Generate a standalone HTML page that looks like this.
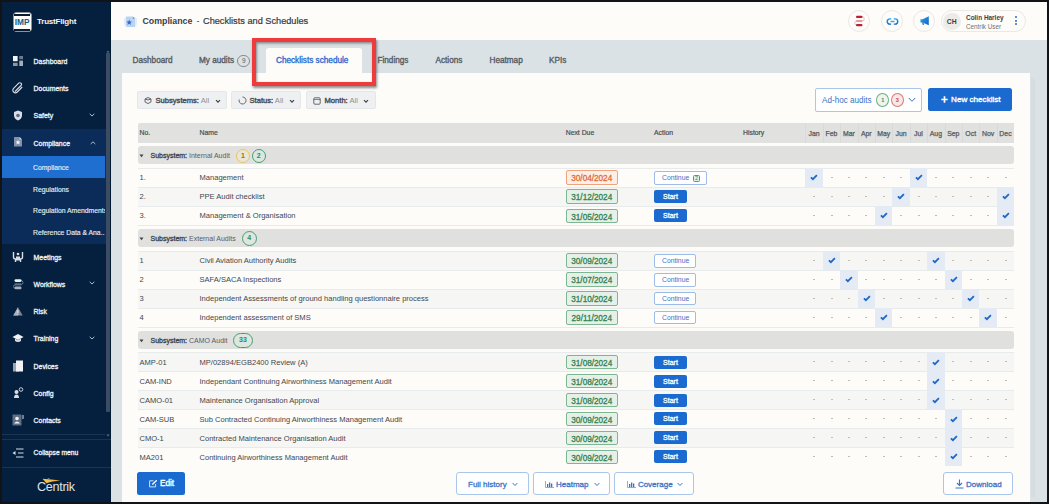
<!DOCTYPE html><html><head><meta charset="utf-8"><style>
*{box-sizing:border-box;margin:0;padding:0}
html,body{width:1049px;height:504px;overflow:hidden;background:#111317;font-family:"Liberation Sans",sans-serif}
#frame{position:absolute;left:2px;top:2px;width:1045px;height:500px;overflow:hidden;background:#dbe2e5}
#c{position:absolute;left:-2px;top:-2px;width:1049px;height:504px}
.a{position:absolute;white-space:nowrap}
.si{position:absolute;left:33.6px;font-size:6.9px;font-weight:normal;-webkit-text-stroke:0.3px currentColor;color:#eef1f5;white-space:nowrap;line-height:10px}
.sub{position:absolute;left:33px;font-size:6.8px;color:#e3e9f0;-webkit-text-stroke:0.15px #e3e9f0;white-space:nowrap;line-height:10px}
.chev{position:absolute;width:4px;height:4px;border-right:1px solid #c9d1dc;border-bottom:1px solid #c9d1dc;transform:rotate(45deg)}
.tab{position:absolute;font-size:8.2px;font-weight:normal;-webkit-text-stroke:0.35px currentColor;color:#565c65;white-space:nowrap;line-height:10px}
.filt{position:absolute;top:91px;height:18px;background:#eef0f2;border:1px solid #e4e7ea;border-radius:2px}
.ft{position:absolute;top:3.9px;font-size:7.6px;font-weight:normal;-webkit-text-stroke:0.4px #4a4f56;color:#4a4f56;line-height:10px;white-space:nowrap}
.ft span{font-weight:normal;color:#8c9097;-webkit-text-stroke:0}
.row{position:absolute;left:137.5px;width:876.5px;height:19px;border-top:1px solid #e7ebec}
.t{position:absolute;font-size:7.55px;color:#43474d;line-height:10px;white-space:nowrap}
.due{position:absolute;left:565.5px;width:52.5px;height:14.5px;border:1px solid #7db792;background:#e7f0e8;border-radius:2px;color:#33834f;font-size:8.2px;font-weight:normal;-webkit-text-stroke:0.3px currentColor;text-align:center;line-height:15.8px}
.due.o{border-color:#f0a27a;background:#fcefe7;color:#e06d38}
.start{position:absolute;left:654px;width:33px;height:13px;background:#1a6ad0;border-radius:2px;color:#fff;font-size:7px;font-weight:normal;-webkit-text-stroke:0.3px #fff;text-align:center;line-height:13.5px}
.cont{position:absolute;left:654px;width:42px;height:13.5px;border:1px solid #9dbde8;background:#fff;border-radius:2px;color:#3b72c6;font-size:6.8px;text-align:center;line-height:11px}
.mc{position:absolute;width:17.4px;height:19px;text-align:center;line-height:19px;font-size:7px;color:#c79a6a}
.mc.k{background:#e4ebf5}
.grp{position:absolute;left:137.5px;width:876.5px;height:19px;background:#e0e0de;border-radius:3px}
.gt{position:absolute;left:13px;top:4.8px;font-size:7px;color:#595d64;line-height:10px;white-space:nowrap}
.gt b{color:#3d4148;font-size:7px;font-weight:normal;-webkit-text-stroke:0.3px #3d4148}
.badge{position:absolute;top:2.4px;height:14.8px;border-radius:7.5px;border:1.1px solid;font-size:7px;font-weight:bold;text-align:center;line-height:12.6px}
.bb{position:absolute;top:472.2px;height:23.3px;border:1px solid #a9c6ec;border-radius:3px;background:#fff;color:#3b72c6;font-size:8px;font-weight:normal;-webkit-text-stroke:0.3px #3b72c6;line-height:23px;white-space:nowrap}
</style></head><body><div id="frame"><div id="c">
<div class="a" style="left:0;top:0;width:111px;height:504px;background:#05203f"></div>
<div class="a" style="left:0;top:128.5px;width:106px;height:115px;background:#0b2c58"></div>
<div class="a" style="left:0;top:156px;width:105px;height:22px;background:#1f6fd1"></div>
<div class="a" style="left:106px;top:53px;width:4px;height:359px;background:#3b4c63;border-radius:1px"></div>
<div class="a" style="left:110px;top:0;width:1px;height:504px;background:#031a33"></div>
<svg class="a" style="left:106px;top:50px" width="4" height="3" viewBox="0 0 4 3"><path d="M0.3 2.6 L2 0.5 L3.7 2.6 Z" fill="#5d6c80"/></svg>
<svg class="a" style="left:106px;top:434px" width="4" height="3" viewBox="0 0 4 3"><path d="M0.3 0.4 L2 2.5 L3.7 0.4 Z" fill="#5d6c80"/></svg>
<div class="a" style="left:12.6px;top:12.3px;width:19.1px;height:19.8px;background:#fdfdfb;border-radius:3.5px;border:1.2px solid #8a949f"></div>
<div class="a" style="left:13.8px;top:14px;width:16.7px;height:1.8px;background:#0b1a33"></div>
<div class="a" style="left:13.8px;top:28.8px;width:16.7px;height:1.8px;background:#0b1a33"></div>
<div class="a" style="left:12.6px;top:17px;width:19.1px;text-align:center;font-size:8.3px;font-weight:bold;color:#1b5a80;line-height:10px;letter-spacing:0px">IMP</div>
<div class="a" style="left:37px;top:17px;font-size:8px;font-weight:bold;color:#f4f6f9;line-height:10px;letter-spacing:-0.2px">TrustFlight</div>
<div class="si" style="top:56.6px">Dashboard</div>
<div class="si" style="top:83.6px">Documents</div>
<div class="si" style="top:111.1px">Safety</div>
<svg class="a" style="left:89.3px;top:112.7px" width="6" height="4" viewBox="0 0 6 4"><path d="M0.7 0.8 L3 3 L5.3 0.8" fill="none" stroke="#c5ccd6" stroke-width="0.9"/></svg>
<div class="si" style="top:138.6px">Compliance</div>
<svg class="a" style="left:90px;top:140.5px" width="6" height="4" viewBox="0 0 6 4"><path d="M0.7 3 L3 0.8 L5.3 3" fill="none" stroke="#c5ccd6" stroke-width="0.9"/></svg>
<div class="si" style="top:252.6px">Meetings</div>
<div class="si" style="top:279.6px">Workflows</div>
<svg class="a" style="left:89.3px;top:281.2px" width="6" height="4" viewBox="0 0 6 4"><path d="M0.7 0.8 L3 3 L5.3 0.8" fill="none" stroke="#c5ccd6" stroke-width="0.9"/></svg>
<div class="si" style="top:306.6px">Risk</div>
<div class="si" style="top:334.1px">Training</div>
<svg class="a" style="left:89.3px;top:335.7px" width="6" height="4" viewBox="0 0 6 4"><path d="M0.7 0.8 L3 3 L5.3 0.8" fill="none" stroke="#c5ccd6" stroke-width="0.9"/></svg>
<div class="si" style="top:361.6px">Devices</div>
<div class="si" style="top:388.6px">Config</div>
<div class="si" style="top:415.6px">Contacts</div>
<div class="sub" style="top:162.5px;width:72px;overflow:hidden">Compliance</div>
<div class="sub" style="top:184.5px;width:72px;overflow:hidden">Regulations</div>
<div class="sub" style="top:206.0px;width:72px;overflow:hidden">Regulation Amendments</div>
<div class="sub" style="top:228.0px;width:72px;overflow:hidden">Reference Data &amp; Ana...</div>
<svg class="a" style="left:12.5px;top:56px" width="10.5" height="10" viewBox="0 0 10.5 10"><rect x="0" y="0" width="4.6" height="5.2" fill="#f3f5f8"/><rect x="6.3" y="0" width="4.2" height="3.2" fill="#6d7b8e"/><rect x="0" y="6.8" width="4.6" height="3.2" fill="#8b97a7"/><rect x="6.3" y="4.6" width="4.2" height="5.4" fill="#a3adbb"/></svg>
<svg class="a" style="left:12px;top:82px" width="12" height="12" viewBox="0 0 12 12"><path d="M3 9.5 L9 3.5 A1.6 1.6 0 0 0 6.7 1.2 L1.6 6.3 A2.6 2.6 0 0 0 5.3 10 L10.2 5" fill="none" stroke="#d9dee6" stroke-width="1.1"/></svg>
<svg class="a" style="left:13px;top:110px" width="10" height="11" viewBox="0 0 10 11"><path d="M5 0.5 L9 2 L9 5.5 C9 8 7 9.8 5 10.5 C3 9.8 1 8 1 5.5 L1 2 Z" fill="#d9dee6"/><circle cx="5" cy="5.5" r="1.8" fill="#5a6a80"/></svg>
<svg class="a" style="left:13.9px;top:137.4px" width="8" height="9.6" viewBox="0 0 8 9.6"><path d="M0 0 H5.6 L8 2.4 V9.6 H0 Z" fill="#8391a6"/><path d="M5.6 0 V2.4 H8 Z" fill="#c9d1dc"/><path d="M4 2.8 L4.75 4.5 L6.5 4.6 L5.15 5.75 L5.6 7.5 L4 6.55 L2.4 7.5 L2.85 5.75 L1.5 4.6 L3.25 4.5 Z" fill="#f4f6f9"/></svg>
<svg class="a" style="left:12px;top:251px" width="12" height="12" viewBox="0 0 12 12"><path d="M1.5 1 V6 Q1.5 8 3.5 8 V11 M10.5 1 V6 Q10.5 8 8.5 8 V11" fill="none" stroke="#d9dee6" stroke-width="1.4"/><circle cx="6" cy="3" r="1.3" fill="#d9dee6"/><rect x="4" y="5.5" width="4" height="4" fill="#d9dee6"/></svg>
<svg class="a" style="left:12px;top:277.5px" width="12" height="12" viewBox="0 0 12 12"><path d="M9 2.5 Q11 2.5 11 4.5 Q11 6.5 9 6.5 H4 Q1.5 6.5 1.5 8.5 Q1.5 10.3 3 10.3" fill="none" stroke="#8794a5" stroke-width="0.7"/><rect x="2.5" y="1.2" width="7" height="2.7" rx="1.3" fill="#eef1f5"/><rect x="2.5" y="5.2" width="7" height="2.4" rx="1.2" fill="#5f6d80"/><rect x="2.5" y="8.6" width="7" height="2.7" rx="1.3" fill="#a7b1be"/></svg>
<svg class="a" style="left:12.5px;top:306.5px" width="10" height="9" viewBox="0 0 10 9"><path d="M5 0.3 L9.7 8.6 H0.3 Z" fill="#7d8898"/><path d="M5 0.3 L5 8.6 H0.3 Z" fill="#a9b2bf"/><rect x="4.5" y="3" width="1" height="3" fill="#e8ecf0"/><rect x="4.5" y="6.8" width="1" height="1" fill="#e8ecf0"/></svg>
<svg class="a" style="left:12px;top:333px" width="12" height="11" viewBox="0 0 12 11"><path d="M6 1 L11.5 4 L6 7 L0.5 4 Z" fill="#f0f2f5"/><path d="M3 5.5 V8 Q6 10 9 8 V5.5 L6 7.2 Z" fill="#d9dee6"/></svg>
<svg class="a" style="left:12px;top:360px" width="12" height="12" viewBox="0 0 12 12"><rect x="1" y="3" width="6" height="8.5" fill="#9aa5b4"/><rect x="4" y="0.5" width="7" height="11" fill="#f0f2f5"/></svg>
<svg class="a" style="left:12px;top:387px" width="12" height="12" viewBox="0 0 12 12"><circle cx="4.5" cy="5" r="2" fill="#d9dee6"/><path d="M2 11 Q2 7.5 4.5 7.5 Q7 7.5 7 11 Z" fill="#d9dee6"/><circle cx="9" cy="2.5" r="1.8" fill="none" stroke="#d9dee6" stroke-width="0.9"/></svg>
<svg class="a" style="left:12px;top:414px" width="12" height="12" viewBox="0 0 12 12"><rect x="0.5" y="0.5" width="9" height="11" fill="#5d6d82"/><circle cx="5" cy="4.5" r="1.8" fill="#f0f2f5"/><path d="M2 9.5 Q5 5.5 8 9.5 Z" fill="#f0f2f5"/><rect x="10.5" y="1" width="1" height="4" fill="#d9dee6"/></svg>
<div class="a" style="left:2px;top:434px;width:103px;height:1px;background:#1a3452"></div>
<div class="a" style="left:2px;top:438.5px;width:109px;height:1px;background:#1a3452"></div>
<div class="a" style="left:2px;top:466.5px;width:109px;height:1px;background:#1a3452"></div>
<svg class="a" style="left:12px;top:448px" width="12" height="10" viewBox="0 0 12 10"><path d="M4 1 H11.5 M6 5 H11.5 M4 9 H11.5" stroke="#d9dee6" stroke-width="1.1"/><path d="M0.5 5 L3.5 3 V7 Z" fill="#d9dee6"/></svg>
<div class="si" style="top:448.3px;font-size:6.7px">Collapse menu</div>
<div class="a" style="left:37px;top:481.1px;font-size:12.6px;color:#dde2e8;line-height:13px;letter-spacing:-0.3px">Centrik</div>
<svg class="a" style="left:42px;top:477.5px" width="19" height="6" viewBox="0 0 19 6"><defs><linearGradient id="sw" x1="0" x2="1"><stop offset="0" stop-color="#f5c85a"/><stop offset="1" stop-color="#e9a730"/></linearGradient></defs><path d="M0.5 0.8 Q9 1.2 18.5 2.6 Q10 3.2 4.5 5.3 Z" fill="url(#sw)"/><path d="M5.5 0.2 L8 0.6 L6 1 Z" fill="#c8d0dc"/></svg>
<div class="a" style="left:111px;top:0;width:938px;height:40px;background:#fdfcf9"></div>
<svg class="a" style="left:123.5px;top:15.5px" width="13" height="11.5" viewBox="0 0 13 11.5"><rect x="0" y="1" width="13" height="9.5" rx="3" fill="#e3ecf7"/><path d="M2 0.5 H8.8 L11 2.7 V11 H2 Z" fill="#bcd4f1"/><path d="M8.8 0.5 V2.7 H11 Z" fill="#5d9ae2"/><path d="M5.2 3.6 L6.05 5.5 L8 5.6 L6.5 6.9 L7 8.9 L5.2 7.8 L3.4 8.9 L3.9 6.9 L2.4 5.6 L4.35 5.5 Z" fill="#2a6fd0"/></svg>
<div class="a" style="left:142.5px;top:15.8px;font-size:8.8px;font-weight:bold;color:#3a3f47;line-height:11px">Compliance</div>
<div class="a" style="left:196.5px;top:15.5px;font-size:9px;color:#3a3f47;line-height:11px">-</div>
<div class="a" style="left:203px;top:15.5px;font-size:9.2px;color:#343941;-webkit-text-stroke:0.2px #343941;line-height:11px">Checklists and Schedules</div>
<div class="a" style="left:848.3px;top:10px;width:22px;height:22px;border-radius:50%;border:1px solid #ebe9e5"></div>
<div class="a" style="left:880.8px;top:10px;width:22px;height:22px;border-radius:50%;border:1px solid #ebe9e5"></div>
<div class="a" style="left:913.3px;top:10px;width:22px;height:22px;border-radius:50%;border:1px solid #ebe9e5"></div>
<svg class="a" style="left:853px;top:15px" width="13" height="12" viewBox="0 0 13 12"><path d="M9 1.8 Q11.3 1.8 11.3 3.9 Q11.3 6 9 6 M4 6 Q1.7 6 1.7 8.1 Q1.7 10.2 4 10.2" fill="none" stroke="#e9a3ab" stroke-width="0.7"/><rect x="3" y="0.8" width="6.5" height="2.2" rx="1.1" fill="#bb1f31"/><rect x="3" y="5" width="6.5" height="2.1" rx="1" fill="#e39aa3"/><rect x="3" y="9.1" width="6.5" height="2.2" rx="1.1" fill="#bb1f31"/></svg>
<svg class="a" style="left:885.5px;top:17.5px" width="13" height="7" viewBox="0 0 14 8"><defs><linearGradient id="lg1" x1="0" y1="0" x2="0" y2="1"><stop offset="0" stop-color="#22a6ea"/><stop offset="1" stop-color="#1464c4"/></linearGradient></defs><path d="M5.5 1 H4 A3 3 0 0 0 4 7 H5.5 M8.5 1 H10 A3 3 0 0 1 10 7 H8.5" fill="none" stroke="url(#lg1)" stroke-width="1.7"/><rect x="4.5" y="3.2" width="5" height="1.6" rx="0.8" fill="#4aa6e6"/></svg>
<svg class="a" style="left:920px;top:16px" width="10" height="10" viewBox="0 0 10 10"><defs><linearGradient id="lg2" x1="0" y1="0" x2="1" y2="1"><stop offset="0" stop-color="#2aa3ea"/><stop offset="1" stop-color="#1463c6"/></linearGradient></defs><path d="M0.5 3.2 H2.5 L8.8 0.3 V9.3 L2.5 6.6 H0.5 Z" fill="url(#lg2)"/><path d="M2 6.5 L2.8 9 H4 L3.6 6.8 Z" fill="#1a78d4"/></svg>
<div class="a" style="left:941.3px;top:10px;width:84.5px;height:21.5px;border-radius:11px;border:1px solid #ebe9e5"></div>
<div class="a" style="left:943px;top:12.5px;width:17.5px;height:17.5px;border-radius:50%;background:#ecebe8;font-size:6.8px;font-weight:bold;color:#3c4047;text-align:center;line-height:17.5px">CH</div>
<div class="a" style="left:966px;top:12.8px;font-size:6.45px;font-weight:bold;color:#3c4047;line-height:9px">Colin Harley</div>
<div class="a" style="left:966px;top:22px;font-size:6.3px;color:#6c7178;line-height:9px">Centrik User</div>
<div class="a" style="left:1015px;top:16.4px;width:2px;height:2px;border-radius:50%;background:#2a6cd3"></div>
<div class="a" style="left:1015px;top:19.759999999999998px;width:2px;height:2px;border-radius:50%;background:#2a6cd3"></div>
<div class="a" style="left:1015px;top:23.119999999999997px;width:2px;height:2px;border-radius:50%;background:#2a6cd3"></div>
<div class="tab" style="left:132.5px;top:55.9px">Dashboard</div>
<div class="tab" style="left:199.0px;top:55.9px">My audits</div>
<div class="tab" style="left:377.5px;top:55.9px">Findings</div>
<div class="tab" style="left:435.5px;top:55.9px">Actions</div>
<div class="tab" style="left:489.5px;top:55.9px">Heatmap</div>
<div class="tab" style="left:549.0px;top:55.9px">KPIs</div>
<div class="a" style="left:237px;top:54.5px;width:13.4px;height:12px;border-radius:6px;border:1px solid #878c93;font-size:6.5px;color:#555a61;text-align:center;line-height:10px">9</div>
<div class="a" style="left:266px;top:48px;width:96px;height:26px;background:#fdfcf9;border-radius:3px 3px 0 0"></div>
<div class="tab" style="left:276px;top:55.9px;color:#2f6bd0">Checklists schedule</div>
<div class="a" style="left:122px;top:73px;width:908px;height:431px;background:#fdfcf9"></div>
<div class="a" style="left:1031px;top:78px;width:4px;height:419px;background:#d6dde0"></div>
<div class="filt" style="left:137px;width:90px"><svg class="a" style="left:6px;top:4px" width="8" height="9" viewBox="0 0 8 9"><path d="M1 3 Q4 0 7 3 V6 Q4 9 1 6 Z M1 3 Q4 5 7 3" fill="none" stroke="#555a61" stroke-width="0.9"/></svg><div class="ft" style="left:17.5px">Subsystems: <span>All</span></div><svg class="a" style="left:76.5px;top:6.5px" width="6" height="5" viewBox="0 0 6 5"><path d="M1 1.2 L3 3.2 L5 1.2" fill="none" stroke="#3e434a" stroke-width="1.2"/></svg></div>
<div class="filt" style="left:231px;width:70px"><svg class="a" style="left:6px;top:4px" width="9" height="9" viewBox="0 0 9 9"><path d="M4.5 1 A3.5 3.5 0 1 1 1.2 3.5" fill="none" stroke="#555a61" stroke-width="0.9"/></svg><div class="ft" style="left:17.5px">Status: <span>All</span></div><svg class="a" style="left:56.5px;top:6.5px" width="6" height="5" viewBox="0 0 6 5"><path d="M1 1.2 L3 3.2 L5 1.2" fill="none" stroke="#3e434a" stroke-width="1.2"/></svg></div>
<div class="filt" style="left:306px;width:69.5px"><svg class="a" style="left:6px;top:4.5px" width="8" height="8" viewBox="0 0 8 8"><rect x="0.8" y="0.8" width="6.4" height="6.4" rx="1" fill="none" stroke="#555a61" stroke-width="0.9"/><path d="M0.8 2.5 H7.2" stroke="#555a61" stroke-width="0.7"/></svg><div class="ft" style="left:17.5px">Month: <span>All</span></div><svg class="a" style="left:56.0px;top:6.5px" width="6" height="5" viewBox="0 0 6 5"><path d="M1 1.2 L3 3.2 L5 1.2" fill="none" stroke="#3e434a" stroke-width="1.2"/></svg></div>
<div class="a" style="left:815px;top:88px;width:106.5px;height:23.7px;border:1px solid #a9c6ec;border-radius:2px;background:#fff"></div>
<div class="a" style="left:822px;top:96px;font-size:8.15px;color:#3b72c6;line-height:10px">Ad-hoc audits</div>
<div class="a" style="left:876.2px;top:92.7px;width:13px;height:14.3px;border-radius:50%;border:1px solid #6fae85;background:#eef5ef;font-size:5.5px;color:#3d8a5a;text-align:center;line-height:12.3px;font-weight:bold">1</div>
<div class="a" style="left:890.8px;top:92.7px;width:13.2px;height:14.3px;border-radius:50%;border:1px solid #d97a72;background:#f8e8e5;font-size:5.5px;color:#c9483f;text-align:center;line-height:12.3px;font-weight:bold">3</div>
<svg class="a" style="left:907.5px;top:97px" width="8" height="6" viewBox="0 0 8 6"><path d="M0.8 1 L4 4.3 L7.2 1" fill="none" stroke="#3b72c6" stroke-width="1"/></svg>
<div class="a" style="left:928.4px;top:88.3px;width:84.1px;height:23.2px;background:#1a6ad0;border-radius:2.5px"></div>
<svg class="a" style="left:940.5px;top:96.3px" width="7" height="7" viewBox="0 0 7 7"><path d="M3.5 0.3 V6.7 M0.3 3.5 H6.7" stroke="#fff" stroke-width="1.7"/></svg>
<div class="a" style="left:951.1px;top:95.3px;font-size:8.1px;font-weight:normal;-webkit-text-stroke:0.35px #fff;color:#fff;line-height:10px">New checklist</div>
<div class="a" style="left:137.5px;top:123.4px;width:876.5px;height:19.3px;background:#e1e1df;border-radius:2px 0 0 0"></div>
<div class="t" style="left:139.5px;top:128.3px;font-size:6.85px;-webkit-text-stroke:0.2px #4a4e55;color:#4a4e55">No.</div>
<div class="t" style="left:199.5px;top:128.3px;font-size:6.85px;-webkit-text-stroke:0.2px #4a4e55;color:#4a4e55">Name</div>
<div class="t" style="left:565.7px;top:128.3px;font-size:6.85px;-webkit-text-stroke:0.2px #4a4e55;color:#4a4e55">Next Due</div>
<div class="t" style="left:654px;top:128.3px;font-size:6.85px;-webkit-text-stroke:0.2px #4a4e55;color:#4a4e55">Action</div>
<div class="t" style="left:743px;top:128.3px;font-size:6.85px;-webkit-text-stroke:0.2px #4a4e55;color:#4a4e55">History</div>
<div class="a" style="left:805.4px;top:123.4px;width:1px;height:19.3px;background:#d9d9d7"></div>
<div class="t" style="left:805.4px;top:128.5px;width:17.4px;text-align:center;font-size:6.9px;-webkit-text-stroke:0.25px #555a61;color:#555a61">Jan</div>
<div class="a" style="left:822.8px;top:123.4px;width:1px;height:19.3px;background:#d9d9d7"></div>
<div class="t" style="left:822.8px;top:128.5px;width:17.4px;text-align:center;font-size:6.9px;-webkit-text-stroke:0.25px #555a61;color:#555a61">Feb</div>
<div class="a" style="left:840.1999999999999px;top:123.4px;width:1px;height:19.3px;background:#d9d9d7"></div>
<div class="t" style="left:840.1999999999999px;top:128.5px;width:17.4px;text-align:center;font-size:6.9px;-webkit-text-stroke:0.25px #555a61;color:#555a61">Mar</div>
<div class="a" style="left:857.6px;top:123.4px;width:1px;height:19.3px;background:#d9d9d7"></div>
<div class="t" style="left:857.6px;top:128.5px;width:17.4px;text-align:center;font-size:6.9px;-webkit-text-stroke:0.25px #555a61;color:#555a61">Apr</div>
<div class="a" style="left:875.0px;top:123.4px;width:1px;height:19.3px;background:#d9d9d7"></div>
<div class="t" style="left:875.0px;top:128.5px;width:17.4px;text-align:center;font-size:6.9px;-webkit-text-stroke:0.25px #555a61;color:#555a61">May</div>
<div class="a" style="left:892.4px;top:123.4px;width:1px;height:19.3px;background:#d9d9d7"></div>
<div class="t" style="left:892.4px;top:128.5px;width:17.4px;text-align:center;font-size:6.9px;-webkit-text-stroke:0.25px #555a61;color:#555a61">Jun</div>
<div class="a" style="left:909.8px;top:123.4px;width:1px;height:19.3px;background:#d9d9d7"></div>
<div class="t" style="left:909.8px;top:128.5px;width:17.4px;text-align:center;font-size:6.9px;-webkit-text-stroke:0.25px #555a61;color:#555a61">Jul</div>
<div class="a" style="left:927.1999999999999px;top:123.4px;width:1px;height:19.3px;background:#d9d9d7"></div>
<div class="t" style="left:927.1999999999999px;top:128.5px;width:17.4px;text-align:center;font-size:6.9px;-webkit-text-stroke:0.25px #555a61;color:#555a61">Aug</div>
<div class="a" style="left:944.5999999999999px;top:123.4px;width:1px;height:19.3px;background:#d9d9d7"></div>
<div class="t" style="left:944.5999999999999px;top:128.5px;width:17.4px;text-align:center;font-size:6.9px;-webkit-text-stroke:0.25px #555a61;color:#555a61">Sep</div>
<div class="a" style="left:962.0px;top:123.4px;width:1px;height:19.3px;background:#d9d9d7"></div>
<div class="t" style="left:962.0px;top:128.5px;width:17.4px;text-align:center;font-size:6.9px;-webkit-text-stroke:0.25px #555a61;color:#555a61">Oct</div>
<div class="a" style="left:979.4px;top:123.4px;width:1px;height:19.3px;background:#d9d9d7"></div>
<div class="t" style="left:979.4px;top:128.5px;width:17.4px;text-align:center;font-size:6.9px;-webkit-text-stroke:0.25px #555a61;color:#555a61">Nov</div>
<div class="a" style="left:996.8px;top:123.4px;width:1px;height:19.3px;background:#d9d9d7"></div>
<div class="t" style="left:996.8px;top:128.5px;width:17.4px;text-align:center;font-size:6.9px;-webkit-text-stroke:0.25px #555a61;color:#555a61">Dec</div>
<div class="grp" style="top:146.2px;height:17.9px"><svg class="a" style="left:1.5px;top:7.5px" width="5" height="4" viewBox="0 0 5 4"><path d="M0.5 0.5 H4.5 L2.5 3.2 Z" fill="#3d4148"/></svg><div class="gt"><b>Subsystem:</b> Internal Audit</div>
<div class="badge" style="left:98.69999999999999px;width:13.6px;border-color:#eec55c;color:#8f7425;background:#e9e6d8">1</div>
<div class="badge" style="left:114.0px;width:14.5px;border-color:#45a070;color:#2f8a5a;background:#dde6df">2</div>
</div>
<div class="row" style="top:167.7px;background:#fdfcf9"></div>
<div class="mc k" style="left:805.4px;top:167.7px"><svg style="position:absolute;left:5px;top:6.6px" width="8" height="7" viewBox="0 0 8 7"><path d="M0.9 3.3 L2.9 5.2 L6.9 1.1" fill="none" stroke="#1e67c9" stroke-width="1.75"/></svg></div>
<div class="a" style="left:830.5999999999999px;top:176.89999999999998px;width:2px;height:1px;background:#cbbba6"></div>
<div class="a" style="left:847.9999999999999px;top:176.89999999999998px;width:2px;height:1px;background:#cbbba6"></div>
<div class="a" style="left:865.4px;top:176.89999999999998px;width:2px;height:1px;background:#cbbba6"></div>
<div class="a" style="left:882.8px;top:176.89999999999998px;width:2px;height:1px;background:#cbbba6"></div>
<div class="a" style="left:900.1999999999999px;top:176.89999999999998px;width:2px;height:1px;background:#cbbba6"></div>
<div class="mc k" style="left:909.8px;top:167.7px"><svg style="position:absolute;left:5px;top:6.6px" width="8" height="7" viewBox="0 0 8 7"><path d="M0.9 3.3 L2.9 5.2 L6.9 1.1" fill="none" stroke="#1e67c9" stroke-width="1.75"/></svg></div>
<div class="a" style="left:934.9999999999999px;top:176.89999999999998px;width:2px;height:1px;background:#cbbba6"></div>
<div class="a" style="left:952.3999999999999px;top:176.89999999999998px;width:2px;height:1px;background:#cbbba6"></div>
<div class="a" style="left:969.8px;top:176.89999999999998px;width:2px;height:1px;background:#cbbba6"></div>
<div class="a" style="left:987.1999999999999px;top:176.89999999999998px;width:2px;height:1px;background:#cbbba6"></div>
<div class="a" style="left:1004.5999999999999px;top:176.89999999999998px;width:2px;height:1px;background:#cbbba6"></div>
<div class="t" style="left:139.5px;top:173.29999999999998px">1.</div>
<div class="t" style="left:199.5px;top:173.29999999999998px">Management</div>
<div class="due o" style="top:170.39999999999998px">30/04/2024</div>
<div class="cont" style="top:171.0px;width:52.5px;text-align:left;padding-left:7px">Continue</div>
<div class="a" style="left:693.1px;top:174.6px;width:7px;height:7px;border:1.1px solid #4aa070;border-radius:1.5px;background:#e3efe6;font-size:5.5px;color:#3d8a5a;text-align:center;line-height:5px">2</div>
<div class="row" style="top:186.75px;background:#f6f6f4"></div>
<div class="a" style="left:813.1999999999999px;top:195.95px;width:2px;height:1px;background:#cbbba6"></div>
<div class="a" style="left:830.5999999999999px;top:195.95px;width:2px;height:1px;background:#cbbba6"></div>
<div class="a" style="left:847.9999999999999px;top:195.95px;width:2px;height:1px;background:#cbbba6"></div>
<div class="a" style="left:865.4px;top:195.95px;width:2px;height:1px;background:#cbbba6"></div>
<div class="a" style="left:882.8px;top:195.95px;width:2px;height:1px;background:#cbbba6"></div>
<div class="mc k" style="left:892.4px;top:186.75px"><svg style="position:absolute;left:5px;top:6.6px" width="8" height="7" viewBox="0 0 8 7"><path d="M0.9 3.3 L2.9 5.2 L6.9 1.1" fill="none" stroke="#1e67c9" stroke-width="1.75"/></svg></div>
<div class="a" style="left:917.5999999999999px;top:195.95px;width:2px;height:1px;background:#cbbba6"></div>
<div class="a" style="left:934.9999999999999px;top:195.95px;width:2px;height:1px;background:#cbbba6"></div>
<div class="a" style="left:952.3999999999999px;top:195.95px;width:2px;height:1px;background:#cbbba6"></div>
<div class="a" style="left:969.8px;top:195.95px;width:2px;height:1px;background:#cbbba6"></div>
<div class="a" style="left:987.1999999999999px;top:195.95px;width:2px;height:1px;background:#cbbba6"></div>
<div class="mc k" style="left:996.8px;top:186.75px"><svg style="position:absolute;left:5px;top:6.6px" width="8" height="7" viewBox="0 0 8 7"><path d="M0.9 3.3 L2.9 5.2 L6.9 1.1" fill="none" stroke="#1e67c9" stroke-width="1.75"/></svg></div>
<div class="t" style="left:139.5px;top:192.35px">2.</div>
<div class="t" style="left:199.5px;top:192.35px">PPE Audit checklist</div>
<div class="due" style="top:189.45px">31/12/2024</div>
<div class="start" style="top:190.25px">Start</div>
<div class="row" style="top:205.79999999999998px;background:#fdfcf9"></div>
<div class="a" style="left:813.1999999999999px;top:214.99999999999997px;width:2px;height:1px;background:#cbbba6"></div>
<div class="a" style="left:830.5999999999999px;top:214.99999999999997px;width:2px;height:1px;background:#cbbba6"></div>
<div class="a" style="left:847.9999999999999px;top:214.99999999999997px;width:2px;height:1px;background:#cbbba6"></div>
<div class="a" style="left:865.4px;top:214.99999999999997px;width:2px;height:1px;background:#cbbba6"></div>
<div class="mc k" style="left:875.0px;top:205.79999999999998px"><svg style="position:absolute;left:5px;top:6.6px" width="8" height="7" viewBox="0 0 8 7"><path d="M0.9 3.3 L2.9 5.2 L6.9 1.1" fill="none" stroke="#1e67c9" stroke-width="1.75"/></svg></div>
<div class="a" style="left:900.1999999999999px;top:214.99999999999997px;width:2px;height:1px;background:#cbbba6"></div>
<div class="a" style="left:917.5999999999999px;top:214.99999999999997px;width:2px;height:1px;background:#cbbba6"></div>
<div class="a" style="left:934.9999999999999px;top:214.99999999999997px;width:2px;height:1px;background:#cbbba6"></div>
<div class="a" style="left:952.3999999999999px;top:214.99999999999997px;width:2px;height:1px;background:#cbbba6"></div>
<div class="a" style="left:969.8px;top:214.99999999999997px;width:2px;height:1px;background:#cbbba6"></div>
<div class="a" style="left:987.1999999999999px;top:214.99999999999997px;width:2px;height:1px;background:#cbbba6"></div>
<div class="mc k" style="left:996.8px;top:205.79999999999998px"><svg style="position:absolute;left:5px;top:6.6px" width="8" height="7" viewBox="0 0 8 7"><path d="M0.9 3.3 L2.9 5.2 L6.9 1.1" fill="none" stroke="#1e67c9" stroke-width="1.75"/></svg></div>
<div class="t" style="left:139.5px;top:211.39999999999998px">3.</div>
<div class="t" style="left:199.5px;top:211.39999999999998px">Management &amp; Organisation</div>
<div class="due" style="top:208.49999999999997px">31/05/2024</div>
<div class="start" style="top:209.29999999999998px">Start</div>
<div class="a" style="left:137.5px;top:224.85px;width:876.5px;height:1px;background:#e7ebec"></div>
<div class="grp" style="top:229.0px;height:17.9px"><svg class="a" style="left:1.5px;top:7.5px" width="5" height="4" viewBox="0 0 5 4"><path d="M0.5 0.5 H4.5 L2.5 3.2 Z" fill="#3d4148"/></svg><div class="gt"><b>Subsystem:</b> External Audits</div>
<div class="badge" style="left:104.30000000000001px;width:14.9px;border-color:#45a070;color:#2f8a5a;background:#dde6df">4</div>
</div>
<div class="row" style="top:250.75px;background:#f6f6f4"></div>
<div class="a" style="left:813.1999999999999px;top:259.95px;width:2px;height:1px;background:#cbbba6"></div>
<div class="mc k" style="left:822.8px;top:250.75px"><svg style="position:absolute;left:5px;top:6.6px" width="8" height="7" viewBox="0 0 8 7"><path d="M0.9 3.3 L2.9 5.2 L6.9 1.1" fill="none" stroke="#1e67c9" stroke-width="1.75"/></svg></div>
<div class="a" style="left:847.9999999999999px;top:259.95px;width:2px;height:1px;background:#cbbba6"></div>
<div class="a" style="left:865.4px;top:259.95px;width:2px;height:1px;background:#cbbba6"></div>
<div class="a" style="left:882.8px;top:259.95px;width:2px;height:1px;background:#cbbba6"></div>
<div class="a" style="left:900.1999999999999px;top:259.95px;width:2px;height:1px;background:#cbbba6"></div>
<div class="a" style="left:917.5999999999999px;top:259.95px;width:2px;height:1px;background:#cbbba6"></div>
<div class="mc k" style="left:927.1999999999999px;top:250.75px"><svg style="position:absolute;left:5px;top:6.6px" width="8" height="7" viewBox="0 0 8 7"><path d="M0.9 3.3 L2.9 5.2 L6.9 1.1" fill="none" stroke="#1e67c9" stroke-width="1.75"/></svg></div>
<div class="a" style="left:952.3999999999999px;top:259.95px;width:2px;height:1px;background:#cbbba6"></div>
<div class="a" style="left:969.8px;top:259.95px;width:2px;height:1px;background:#cbbba6"></div>
<div class="a" style="left:987.1999999999999px;top:259.95px;width:2px;height:1px;background:#cbbba6"></div>
<div class="a" style="left:1004.5999999999999px;top:259.95px;width:2px;height:1px;background:#cbbba6"></div>
<div class="t" style="left:139.5px;top:256.35px">1</div>
<div class="t" style="left:199.5px;top:256.35px">Civil Aviation Authority Audits</div>
<div class="due" style="top:253.45px">30/09/2024</div>
<div class="cont" style="top:254.05px;width:42px;text-align:left;padding-left:7px">Continue</div>
<div class="row" style="top:269.7px;background:#fdfcf9"></div>
<div class="a" style="left:813.1999999999999px;top:278.9px;width:2px;height:1px;background:#cbbba6"></div>
<div class="a" style="left:830.5999999999999px;top:278.9px;width:2px;height:1px;background:#cbbba6"></div>
<div class="mc k" style="left:840.1999999999999px;top:269.7px"><svg style="position:absolute;left:5px;top:6.6px" width="8" height="7" viewBox="0 0 8 7"><path d="M0.9 3.3 L2.9 5.2 L6.9 1.1" fill="none" stroke="#1e67c9" stroke-width="1.75"/></svg></div>
<div class="a" style="left:865.4px;top:278.9px;width:2px;height:1px;background:#cbbba6"></div>
<div class="a" style="left:882.8px;top:278.9px;width:2px;height:1px;background:#cbbba6"></div>
<div class="a" style="left:900.1999999999999px;top:278.9px;width:2px;height:1px;background:#cbbba6"></div>
<div class="a" style="left:917.5999999999999px;top:278.9px;width:2px;height:1px;background:#cbbba6"></div>
<div class="a" style="left:934.9999999999999px;top:278.9px;width:2px;height:1px;background:#cbbba6"></div>
<div class="mc k" style="left:944.5999999999999px;top:269.7px"><svg style="position:absolute;left:5px;top:6.6px" width="8" height="7" viewBox="0 0 8 7"><path d="M0.9 3.3 L2.9 5.2 L6.9 1.1" fill="none" stroke="#1e67c9" stroke-width="1.75"/></svg></div>
<div class="a" style="left:969.8px;top:278.9px;width:2px;height:1px;background:#cbbba6"></div>
<div class="a" style="left:987.1999999999999px;top:278.9px;width:2px;height:1px;background:#cbbba6"></div>
<div class="a" style="left:1004.5999999999999px;top:278.9px;width:2px;height:1px;background:#cbbba6"></div>
<div class="t" style="left:139.5px;top:275.3px">2</div>
<div class="t" style="left:199.5px;top:275.3px">SAFA/SACA Inspections</div>
<div class="due" style="top:272.4px">31/07/2024</div>
<div class="cont" style="top:273.0px;width:42px;text-align:left;padding-left:7px">Continue</div>
<div class="row" style="top:288.65px;background:#f6f6f4"></div>
<div class="a" style="left:813.1999999999999px;top:297.84999999999997px;width:2px;height:1px;background:#cbbba6"></div>
<div class="a" style="left:830.5999999999999px;top:297.84999999999997px;width:2px;height:1px;background:#cbbba6"></div>
<div class="a" style="left:847.9999999999999px;top:297.84999999999997px;width:2px;height:1px;background:#cbbba6"></div>
<div class="mc k" style="left:857.6px;top:288.65px"><svg style="position:absolute;left:5px;top:6.6px" width="8" height="7" viewBox="0 0 8 7"><path d="M0.9 3.3 L2.9 5.2 L6.9 1.1" fill="none" stroke="#1e67c9" stroke-width="1.75"/></svg></div>
<div class="a" style="left:882.8px;top:297.84999999999997px;width:2px;height:1px;background:#cbbba6"></div>
<div class="a" style="left:900.1999999999999px;top:297.84999999999997px;width:2px;height:1px;background:#cbbba6"></div>
<div class="a" style="left:917.5999999999999px;top:297.84999999999997px;width:2px;height:1px;background:#cbbba6"></div>
<div class="a" style="left:934.9999999999999px;top:297.84999999999997px;width:2px;height:1px;background:#cbbba6"></div>
<div class="a" style="left:952.3999999999999px;top:297.84999999999997px;width:2px;height:1px;background:#cbbba6"></div>
<div class="mc k" style="left:962.0px;top:288.65px"><svg style="position:absolute;left:5px;top:6.6px" width="8" height="7" viewBox="0 0 8 7"><path d="M0.9 3.3 L2.9 5.2 L6.9 1.1" fill="none" stroke="#1e67c9" stroke-width="1.75"/></svg></div>
<div class="a" style="left:987.1999999999999px;top:297.84999999999997px;width:2px;height:1px;background:#cbbba6"></div>
<div class="a" style="left:1004.5999999999999px;top:297.84999999999997px;width:2px;height:1px;background:#cbbba6"></div>
<div class="t" style="left:139.5px;top:294.25px">3</div>
<div class="t" style="left:199.5px;top:294.25px">Independent Assessments of ground handling questionnaire process</div>
<div class="due" style="top:291.34999999999997px">31/10/2024</div>
<div class="cont" style="top:291.95px;width:42px;text-align:left;padding-left:7px">Continue</div>
<div class="row" style="top:307.6px;background:#fdfcf9"></div>
<div class="a" style="left:813.1999999999999px;top:316.8px;width:2px;height:1px;background:#cbbba6"></div>
<div class="a" style="left:830.5999999999999px;top:316.8px;width:2px;height:1px;background:#cbbba6"></div>
<div class="a" style="left:847.9999999999999px;top:316.8px;width:2px;height:1px;background:#cbbba6"></div>
<div class="a" style="left:865.4px;top:316.8px;width:2px;height:1px;background:#cbbba6"></div>
<div class="mc k" style="left:875.0px;top:307.6px"><svg style="position:absolute;left:5px;top:6.6px" width="8" height="7" viewBox="0 0 8 7"><path d="M0.9 3.3 L2.9 5.2 L6.9 1.1" fill="none" stroke="#1e67c9" stroke-width="1.75"/></svg></div>
<div class="a" style="left:900.1999999999999px;top:316.8px;width:2px;height:1px;background:#cbbba6"></div>
<div class="a" style="left:917.5999999999999px;top:316.8px;width:2px;height:1px;background:#cbbba6"></div>
<div class="a" style="left:934.9999999999999px;top:316.8px;width:2px;height:1px;background:#cbbba6"></div>
<div class="a" style="left:952.3999999999999px;top:316.8px;width:2px;height:1px;background:#cbbba6"></div>
<div class="a" style="left:969.8px;top:316.8px;width:2px;height:1px;background:#cbbba6"></div>
<div class="mc k" style="left:979.4px;top:307.6px"><svg style="position:absolute;left:5px;top:6.6px" width="8" height="7" viewBox="0 0 8 7"><path d="M0.9 3.3 L2.9 5.2 L6.9 1.1" fill="none" stroke="#1e67c9" stroke-width="1.75"/></svg></div>
<div class="a" style="left:1004.5999999999999px;top:316.8px;width:2px;height:1px;background:#cbbba6"></div>
<div class="t" style="left:139.5px;top:313.20000000000005px">4</div>
<div class="t" style="left:199.5px;top:313.20000000000005px">Independent assessment of SMS</div>
<div class="due" style="top:310.3px">29/11/2024</div>
<div class="cont" style="top:310.90000000000003px;width:42px;text-align:left;padding-left:7px">Continue</div>
<div class="a" style="left:137.5px;top:326.55px;width:876.5px;height:1px;background:#e7ebec"></div>
<div class="grp" style="top:331.0px;height:17.9px"><svg class="a" style="left:1.5px;top:7.5px" width="5" height="4" viewBox="0 0 5 4"><path d="M0.5 0.5 H4.5 L2.5 3.2 Z" fill="#3d4148"/></svg><div class="gt"><b>Subsystem:</b> CAMO Audit</div>
<div class="badge" style="left:95.4px;width:20px;border-color:#45a070;color:#2f8a5a;background:#dde6df">33</div>
</div>
<div class="row" style="top:352.1px;background:#f6f6f4"></div>
<div class="a" style="left:813.1999999999999px;top:361.3px;width:2px;height:1px;background:#cbbba6"></div>
<div class="a" style="left:830.5999999999999px;top:361.3px;width:2px;height:1px;background:#cbbba6"></div>
<div class="a" style="left:847.9999999999999px;top:361.3px;width:2px;height:1px;background:#cbbba6"></div>
<div class="a" style="left:865.4px;top:361.3px;width:2px;height:1px;background:#cbbba6"></div>
<div class="a" style="left:882.8px;top:361.3px;width:2px;height:1px;background:#cbbba6"></div>
<div class="a" style="left:900.1999999999999px;top:361.3px;width:2px;height:1px;background:#cbbba6"></div>
<div class="a" style="left:917.5999999999999px;top:361.3px;width:2px;height:1px;background:#cbbba6"></div>
<div class="mc k" style="left:927.1999999999999px;top:352.1px"><svg style="position:absolute;left:5px;top:6.6px" width="8" height="7" viewBox="0 0 8 7"><path d="M0.9 3.3 L2.9 5.2 L6.9 1.1" fill="none" stroke="#1e67c9" stroke-width="1.75"/></svg></div>
<div class="a" style="left:952.3999999999999px;top:361.3px;width:2px;height:1px;background:#cbbba6"></div>
<div class="a" style="left:969.8px;top:361.3px;width:2px;height:1px;background:#cbbba6"></div>
<div class="a" style="left:987.1999999999999px;top:361.3px;width:2px;height:1px;background:#cbbba6"></div>
<div class="a" style="left:1004.5999999999999px;top:361.3px;width:2px;height:1px;background:#cbbba6"></div>
<div class="t" style="left:139.5px;top:357.70000000000005px">AMP-01</div>
<div class="t" style="left:199.5px;top:357.70000000000005px">MP/02894/EGB2400 Review (A)</div>
<div class="due" style="top:354.8px">31/08/2024</div>
<div class="start" style="top:355.6px">Start</div>
<div class="row" style="top:371.06px;background:#fdfcf9"></div>
<div class="a" style="left:813.1999999999999px;top:380.26px;width:2px;height:1px;background:#cbbba6"></div>
<div class="a" style="left:830.5999999999999px;top:380.26px;width:2px;height:1px;background:#cbbba6"></div>
<div class="a" style="left:847.9999999999999px;top:380.26px;width:2px;height:1px;background:#cbbba6"></div>
<div class="a" style="left:865.4px;top:380.26px;width:2px;height:1px;background:#cbbba6"></div>
<div class="a" style="left:882.8px;top:380.26px;width:2px;height:1px;background:#cbbba6"></div>
<div class="a" style="left:900.1999999999999px;top:380.26px;width:2px;height:1px;background:#cbbba6"></div>
<div class="a" style="left:917.5999999999999px;top:380.26px;width:2px;height:1px;background:#cbbba6"></div>
<div class="mc k" style="left:927.1999999999999px;top:371.06px"><svg style="position:absolute;left:5px;top:6.6px" width="8" height="7" viewBox="0 0 8 7"><path d="M0.9 3.3 L2.9 5.2 L6.9 1.1" fill="none" stroke="#1e67c9" stroke-width="1.75"/></svg></div>
<div class="a" style="left:952.3999999999999px;top:380.26px;width:2px;height:1px;background:#cbbba6"></div>
<div class="a" style="left:969.8px;top:380.26px;width:2px;height:1px;background:#cbbba6"></div>
<div class="a" style="left:987.1999999999999px;top:380.26px;width:2px;height:1px;background:#cbbba6"></div>
<div class="a" style="left:1004.5999999999999px;top:380.26px;width:2px;height:1px;background:#cbbba6"></div>
<div class="t" style="left:139.5px;top:376.66px">CAM-IND</div>
<div class="t" style="left:199.5px;top:376.66px">Independant Continuing Airworthiness Management Audit</div>
<div class="due" style="top:373.76px">31/08/2024</div>
<div class="start" style="top:374.56px">Start</div>
<div class="row" style="top:390.02000000000004px;background:#f6f6f4"></div>
<div class="a" style="left:813.1999999999999px;top:399.22px;width:2px;height:1px;background:#cbbba6"></div>
<div class="a" style="left:830.5999999999999px;top:399.22px;width:2px;height:1px;background:#cbbba6"></div>
<div class="a" style="left:847.9999999999999px;top:399.22px;width:2px;height:1px;background:#cbbba6"></div>
<div class="a" style="left:865.4px;top:399.22px;width:2px;height:1px;background:#cbbba6"></div>
<div class="a" style="left:882.8px;top:399.22px;width:2px;height:1px;background:#cbbba6"></div>
<div class="a" style="left:900.1999999999999px;top:399.22px;width:2px;height:1px;background:#cbbba6"></div>
<div class="a" style="left:917.5999999999999px;top:399.22px;width:2px;height:1px;background:#cbbba6"></div>
<div class="mc k" style="left:927.1999999999999px;top:390.02000000000004px"><svg style="position:absolute;left:5px;top:6.6px" width="8" height="7" viewBox="0 0 8 7"><path d="M0.9 3.3 L2.9 5.2 L6.9 1.1" fill="none" stroke="#1e67c9" stroke-width="1.75"/></svg></div>
<div class="a" style="left:952.3999999999999px;top:399.22px;width:2px;height:1px;background:#cbbba6"></div>
<div class="a" style="left:969.8px;top:399.22px;width:2px;height:1px;background:#cbbba6"></div>
<div class="a" style="left:987.1999999999999px;top:399.22px;width:2px;height:1px;background:#cbbba6"></div>
<div class="a" style="left:1004.5999999999999px;top:399.22px;width:2px;height:1px;background:#cbbba6"></div>
<div class="t" style="left:139.5px;top:395.62000000000006px">CAMO-01</div>
<div class="t" style="left:199.5px;top:395.62000000000006px">Maintenance Organisation Approval</div>
<div class="due" style="top:392.72px">31/08/2024</div>
<div class="start" style="top:393.52000000000004px">Start</div>
<div class="row" style="top:408.98px;background:#fdfcf9"></div>
<div class="a" style="left:813.1999999999999px;top:418.18px;width:2px;height:1px;background:#cbbba6"></div>
<div class="a" style="left:830.5999999999999px;top:418.18px;width:2px;height:1px;background:#cbbba6"></div>
<div class="a" style="left:847.9999999999999px;top:418.18px;width:2px;height:1px;background:#cbbba6"></div>
<div class="a" style="left:865.4px;top:418.18px;width:2px;height:1px;background:#cbbba6"></div>
<div class="a" style="left:882.8px;top:418.18px;width:2px;height:1px;background:#cbbba6"></div>
<div class="a" style="left:900.1999999999999px;top:418.18px;width:2px;height:1px;background:#cbbba6"></div>
<div class="a" style="left:917.5999999999999px;top:418.18px;width:2px;height:1px;background:#cbbba6"></div>
<div class="a" style="left:934.9999999999999px;top:418.18px;width:2px;height:1px;background:#cbbba6"></div>
<div class="mc k" style="left:944.5999999999999px;top:408.98px"><svg style="position:absolute;left:5px;top:6.6px" width="8" height="7" viewBox="0 0 8 7"><path d="M0.9 3.3 L2.9 5.2 L6.9 1.1" fill="none" stroke="#1e67c9" stroke-width="1.75"/></svg></div>
<div class="a" style="left:969.8px;top:418.18px;width:2px;height:1px;background:#cbbba6"></div>
<div class="a" style="left:987.1999999999999px;top:418.18px;width:2px;height:1px;background:#cbbba6"></div>
<div class="a" style="left:1004.5999999999999px;top:418.18px;width:2px;height:1px;background:#cbbba6"></div>
<div class="t" style="left:139.5px;top:414.58000000000004px">CAM-SUB</div>
<div class="t" style="left:199.5px;top:414.58000000000004px">Sub Contracted Continuing Airworthiness Management Audit</div>
<div class="due" style="top:411.68px">30/09/2024</div>
<div class="start" style="top:412.48px">Start</div>
<div class="row" style="top:427.94000000000005px;background:#f6f6f4"></div>
<div class="a" style="left:813.1999999999999px;top:437.14000000000004px;width:2px;height:1px;background:#cbbba6"></div>
<div class="a" style="left:830.5999999999999px;top:437.14000000000004px;width:2px;height:1px;background:#cbbba6"></div>
<div class="a" style="left:847.9999999999999px;top:437.14000000000004px;width:2px;height:1px;background:#cbbba6"></div>
<div class="a" style="left:865.4px;top:437.14000000000004px;width:2px;height:1px;background:#cbbba6"></div>
<div class="a" style="left:882.8px;top:437.14000000000004px;width:2px;height:1px;background:#cbbba6"></div>
<div class="a" style="left:900.1999999999999px;top:437.14000000000004px;width:2px;height:1px;background:#cbbba6"></div>
<div class="a" style="left:917.5999999999999px;top:437.14000000000004px;width:2px;height:1px;background:#cbbba6"></div>
<div class="a" style="left:934.9999999999999px;top:437.14000000000004px;width:2px;height:1px;background:#cbbba6"></div>
<div class="mc k" style="left:944.5999999999999px;top:427.94000000000005px"><svg style="position:absolute;left:5px;top:6.6px" width="8" height="7" viewBox="0 0 8 7"><path d="M0.9 3.3 L2.9 5.2 L6.9 1.1" fill="none" stroke="#1e67c9" stroke-width="1.75"/></svg></div>
<div class="a" style="left:969.8px;top:437.14000000000004px;width:2px;height:1px;background:#cbbba6"></div>
<div class="a" style="left:987.1999999999999px;top:437.14000000000004px;width:2px;height:1px;background:#cbbba6"></div>
<div class="a" style="left:1004.5999999999999px;top:437.14000000000004px;width:2px;height:1px;background:#cbbba6"></div>
<div class="t" style="left:139.5px;top:433.5400000000001px">CMO-1</div>
<div class="t" style="left:199.5px;top:433.5400000000001px">Contracted Maintenance Organisation Audit</div>
<div class="due" style="top:430.64000000000004px">30/09/2024</div>
<div class="start" style="top:431.44000000000005px">Start</div>
<div class="row" style="top:446.90000000000003px;background:#fdfcf9"></div>
<div class="a" style="left:813.1999999999999px;top:456.1px;width:2px;height:1px;background:#cbbba6"></div>
<div class="a" style="left:830.5999999999999px;top:456.1px;width:2px;height:1px;background:#cbbba6"></div>
<div class="a" style="left:847.9999999999999px;top:456.1px;width:2px;height:1px;background:#cbbba6"></div>
<div class="a" style="left:865.4px;top:456.1px;width:2px;height:1px;background:#cbbba6"></div>
<div class="a" style="left:882.8px;top:456.1px;width:2px;height:1px;background:#cbbba6"></div>
<div class="a" style="left:900.1999999999999px;top:456.1px;width:2px;height:1px;background:#cbbba6"></div>
<div class="a" style="left:917.5999999999999px;top:456.1px;width:2px;height:1px;background:#cbbba6"></div>
<div class="a" style="left:934.9999999999999px;top:456.1px;width:2px;height:1px;background:#cbbba6"></div>
<div class="mc k" style="left:944.5999999999999px;top:446.90000000000003px"><svg style="position:absolute;left:5px;top:6.6px" width="8" height="7" viewBox="0 0 8 7"><path d="M0.9 3.3 L2.9 5.2 L6.9 1.1" fill="none" stroke="#1e67c9" stroke-width="1.75"/></svg></div>
<div class="a" style="left:969.8px;top:456.1px;width:2px;height:1px;background:#cbbba6"></div>
<div class="a" style="left:987.1999999999999px;top:456.1px;width:2px;height:1px;background:#cbbba6"></div>
<div class="a" style="left:1004.5999999999999px;top:456.1px;width:2px;height:1px;background:#cbbba6"></div>
<div class="t" style="left:139.5px;top:452.50000000000006px">MA201</div>
<div class="t" style="left:199.5px;top:452.50000000000006px">Continuing Airworthiness Management Audit</div>
<div class="due" style="top:449.6px">30/09/2024</div>
<div class="start" style="top:450.40000000000003px">Start</div>
<div class="a" style="left:137px;top:472.4px;width:47.8px;height:22.9px;background:#1a6ad0;border-radius:2.5px"></div>
<svg class="a" style="left:148.5px;top:480px" width="8.5" height="7.5" viewBox="0 0 8.5 7.5"><path d="M4.5 0.8 H0.6 V6.9 H6.6 V4" fill="none" stroke="#e8f0fb" stroke-width="0.9"/><path d="M3.3 4.6 L7.8 0.3" stroke="#fff" stroke-width="1.4"/></svg>
<div class="a" style="left:160px;top:479.2px;font-size:8.2px;font-weight:normal;-webkit-text-stroke:0.35px #fff;color:#fff;line-height:10px">Edit</div>
<div class="bb" style="left:456px;width:72.60000000000002px"><span style="position:absolute;left:11px">Full history</span><svg class="a" style="left:55.19999999999999px;top:8.5px" width="6" height="5" viewBox="0 0 6 5"><path d="M0.6 1 L3 3.5 L5.4 1" fill="none" stroke="#3b72c6" stroke-width="1"/></svg></div>
<div class="bb" style="left:533px;width:77.39999999999998px"><svg class="a" style="left:10.8px;top:7.5px" width="9" height="7" viewBox="0 0 9 7"><path d="M0.5 0 V6.5 H9" fill="none" stroke="#6f98d8" stroke-width="0.8"/><rect x="2" y="3" width="1.3" height="3" fill="#3b72c6"/><rect x="4" y="1.5" width="1.3" height="4.5" fill="#3b72c6"/><rect x="6" y="2.5" width="1.3" height="3.5" fill="#3b72c6"/></svg><span style="position:absolute;left:22px">Heatmap</span><svg class="a" style="left:59.799999999999955px;top:8.5px" width="6" height="5" viewBox="0 0 6 5"><path d="M0.6 1 L3 3.5 L5.4 1" fill="none" stroke="#3b72c6" stroke-width="1"/></svg></div>
<div class="bb" style="left:614.4px;width:79.20000000000005px"><svg class="a" style="left:11.2px;top:7.5px" width="9" height="7" viewBox="0 0 9 7"><path d="M0.5 0 V6.5 H9" fill="none" stroke="#6f98d8" stroke-width="0.8"/><rect x="2" y="3" width="1.3" height="3" fill="#3b72c6"/><rect x="4" y="1.5" width="1.3" height="4.5" fill="#3b72c6"/><rect x="6" y="2.5" width="1.3" height="3.5" fill="#3b72c6"/></svg><span style="position:absolute;left:22.5px">Coverage</span><svg class="a" style="left:61.30000000000007px;top:8.5px" width="6" height="5" viewBox="0 0 6 5"><path d="M0.6 1 L3 3.5 L5.4 1" fill="none" stroke="#3b72c6" stroke-width="1"/></svg></div>
<div class="bb" style="left:943px;width:69.5px"><svg class="a" style="left:11px;top:6px" width="9" height="10" viewBox="0 0 9 10"><path d="M4.5 0.5 V6.5 M2 4 L4.5 6.5 L7 4 M0.5 9 H8.5" fill="none" stroke="#3b72c6" stroke-width="1.1"/></svg><span style="position:absolute;left:22px">Download</span></div>
<div class="a" style="left:252.3px;top:38px;width:123.5px;height:48.3px;border:4.5px solid #f03b3d;box-shadow:0.5px 1.5px 2.5px rgba(0,0,0,0.45), inset 1px 1.5px 2.5px rgba(0,0,0,0.4)"></div>
</div></div></body></html>
